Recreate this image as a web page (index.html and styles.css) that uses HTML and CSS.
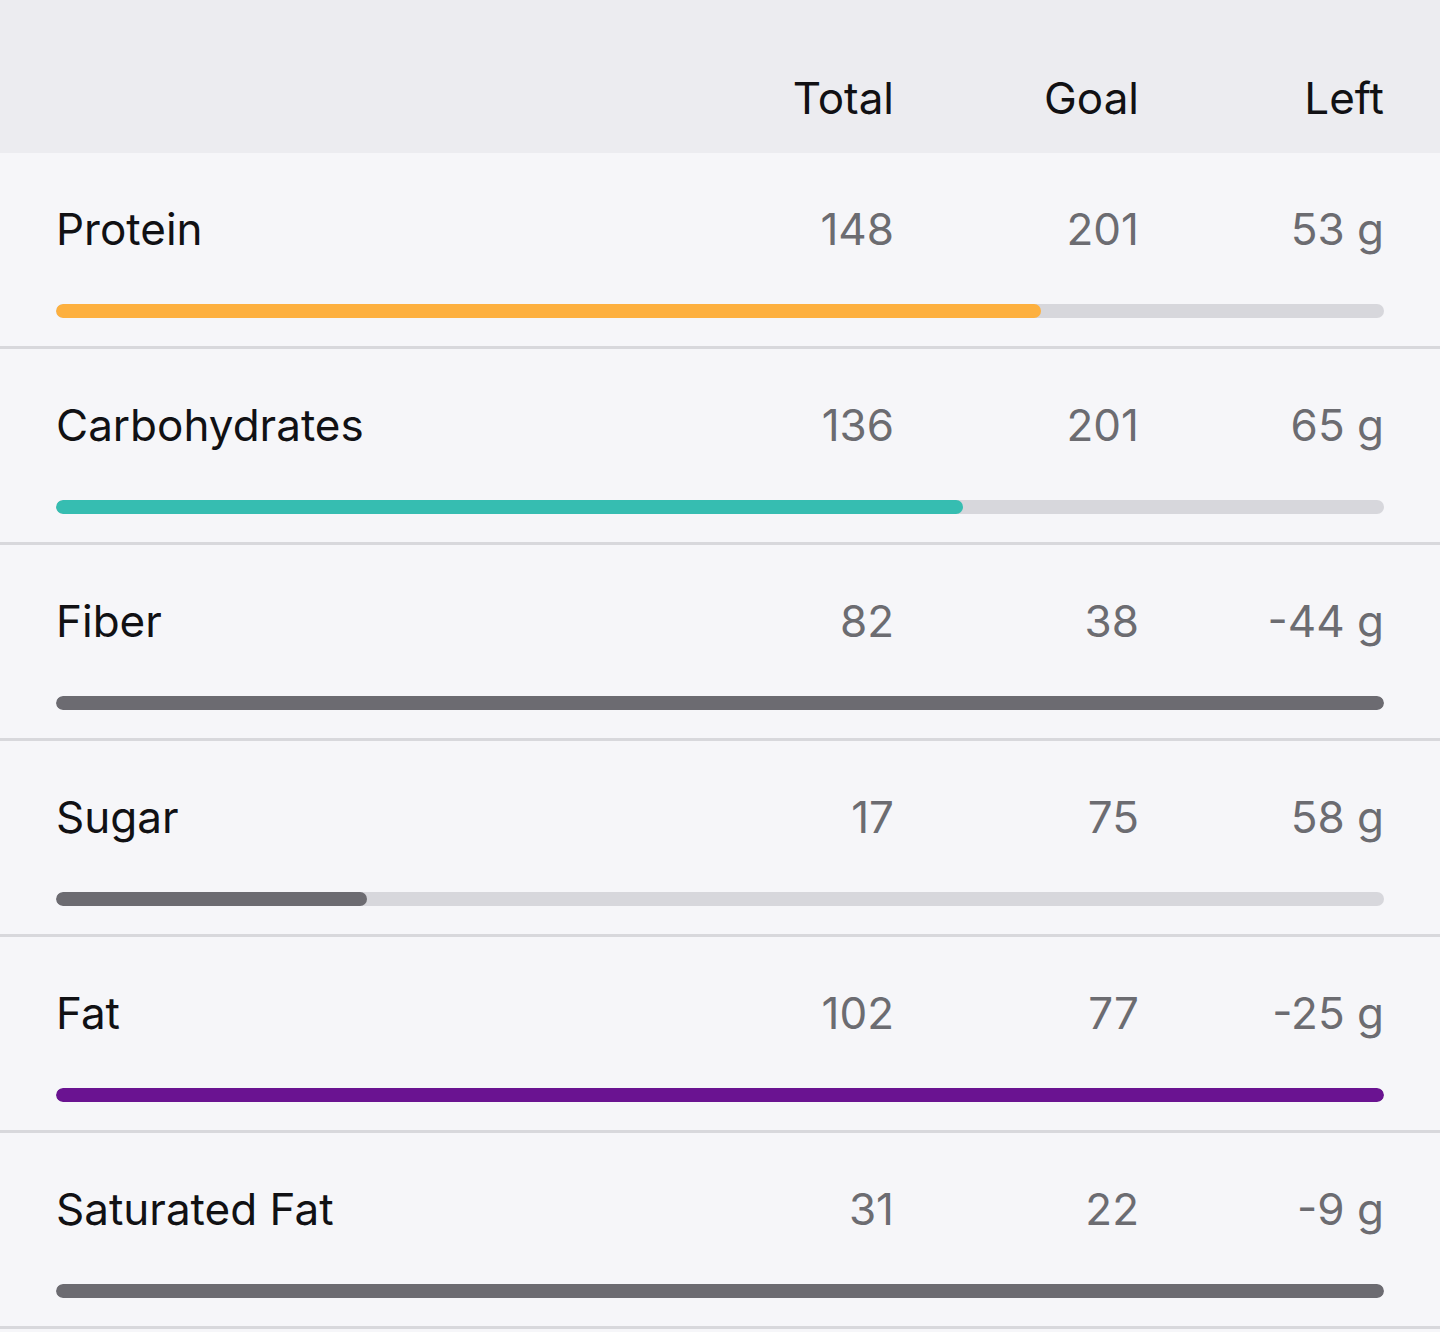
FILE: index.html
```html
<!DOCTYPE html>
<html lang="en">
<head>
<meta charset="utf-8">
<title>Nutrients</title>
<link rel="stylesheet" href="styles.css">
</head>
<body>
<div class="table">
  <div class="head">
    <div class="cell name"></div>
    <div class="cell">Total</div>
    <div class="cell">Goal</div>
    <div class="cell">Left</div>
  </div>

  <div class="row">
    <div class="line">
      <div class="name">Protein</div>
      <div class="num">148</div>
      <div class="num">201</div>
      <div class="num">53 g</div>
    </div>
    <div class="track"><div class="fill orange" style="width:74.2%"></div></div>
  </div>

  <div class="row">
    <div class="line">
      <div class="name">Carbohydrates</div>
      <div class="num">136</div>
      <div class="num">201</div>
      <div class="num">65 g</div>
    </div>
    <div class="track"><div class="fill teal" style="width:68.3%"></div></div>
  </div>

  <div class="row">
    <div class="line">
      <div class="name">Fiber</div>
      <div class="num">82</div>
      <div class="num">38</div>
      <div class="num">-44 g</div>
    </div>
    <div class="track"><div class="fill gray" style="width:100%"></div></div>
  </div>

  <div class="row">
    <div class="line">
      <div class="name">Sugar</div>
      <div class="num">17</div>
      <div class="num">75</div>
      <div class="num">58 g</div>
    </div>
    <div class="track"><div class="fill gray" style="width:23.4%"></div></div>
  </div>

  <div class="row">
    <div class="line">
      <div class="name">Fat</div>
      <div class="num">102</div>
      <div class="num">77</div>
      <div class="num">-25 g</div>
    </div>
    <div class="track"><div class="fill purple" style="width:100%"></div></div>
  </div>

  <div class="row">
    <div class="line">
      <div class="name">Saturated Fat</div>
      <div class="num">31</div>
      <div class="num">22</div>
      <div class="num">-9 g</div>
    </div>
    <div class="track"><div class="fill gray" style="width:100%"></div></div>
  </div>
</div>
</body>
</html>
```

FILE: styles.css
```css
* { box-sizing: border-box; }
html, body {
  margin: 0;
  padding: 0;
  background: #f6f6f9;
}
body {
  font-family: Inter, "Noto Sans", sans-serif;
  font-size: 44px;
  line-height: 54px;
  color: #111114;
}
.table {
  width: 1440px;
}
.head {
  display: grid;
  grid-template-columns: 1fr 245px 245px 245px;
  background: #ececf0;
  height: 153px;
  padding: 71px 56px 28px 56px;
  color: #111114;
}
.head .cell {
  text-align: right;
}
.row {
  padding: 49px 56px 28px 56px;
  border-bottom: 3px solid #d8d8dc;
}
.line {
  display: grid;
  grid-template-columns: 1fr 245px 245px 245px;
}
.name {
  text-align: left;
  color: #111114;
}
.num {
  text-align: right;
  color: #6c6c71;
}
.track {
  margin-top: 48px;
  height: 14px;
  border-radius: 7px;
  background: #d7d7dc;
  overflow: hidden;
}
.fill {
  height: 100%;
  border-radius: 7px;
}
.orange { background: #fdb03f; }
.teal { background: #36bdb1; }
.gray { background: #6c6b71; }
.purple { background: #6a1391; }
```
